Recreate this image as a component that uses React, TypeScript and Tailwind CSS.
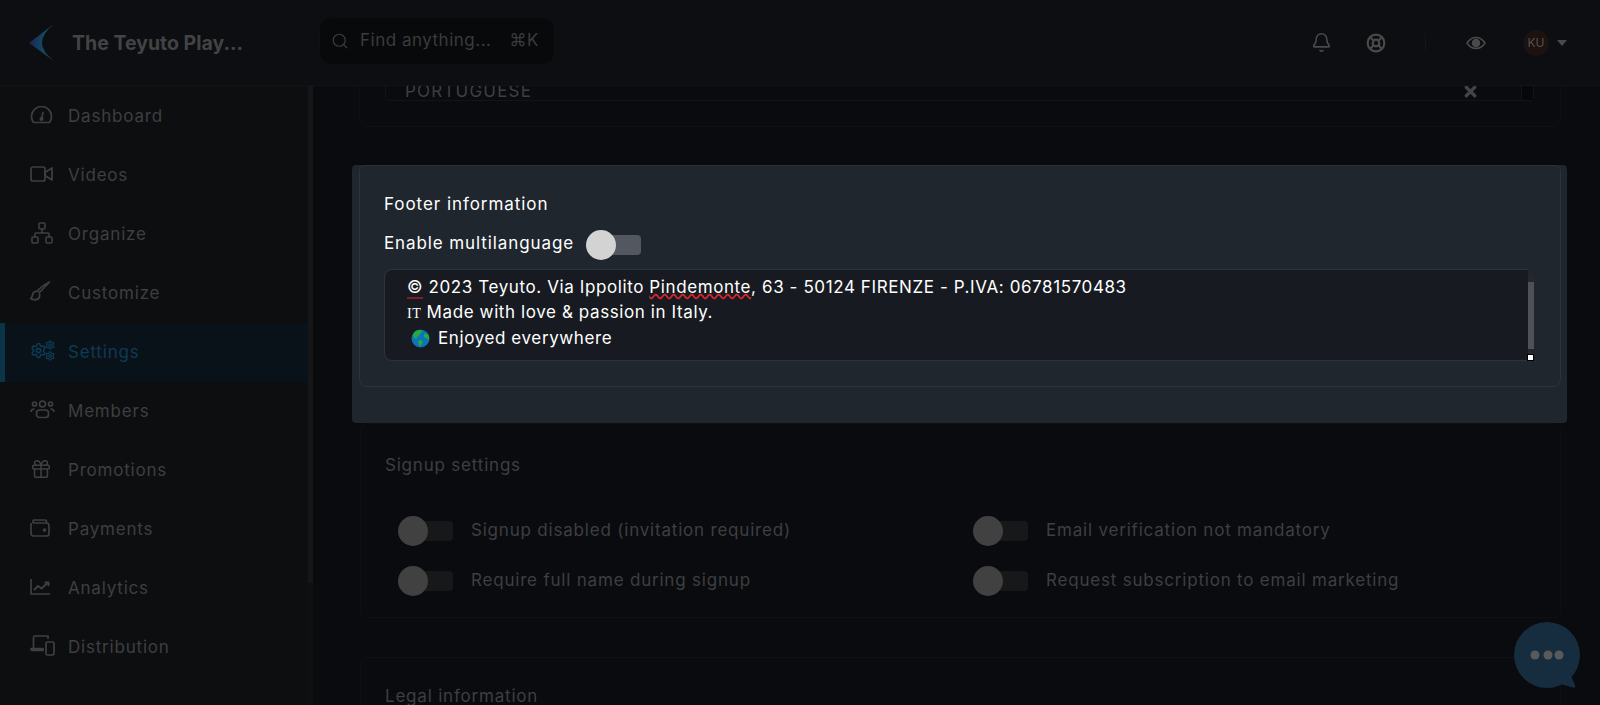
import type { ReactNode } from 'react'
import { Bell, Gift, LifeBuoy, Network, Search, Settings, X } from 'lucide-react'

function GaugeIcon() {
  return (
    <svg width="23" height="18" viewBox="0 0 23 18" fill="none" stroke="currentColor" strokeWidth="1.7" strokeLinecap="round">
      <path d="M3.500 16.500a10 10 0 1 1 16 0z" />
      <path d="M11.500 13.500 13 6.500" />
      <circle cx="11.500" cy="13" r="1.200" fill="currentColor" />
    </svg>
  )
}

function VideoIcon() {
  return (
    <svg width="23" height="16" viewBox="0 0 23 16" fill="none" stroke="currentColor" strokeWidth="1.7" strokeLinejoin="round">
      <rect x="1" y="1" width="14" height="14" rx="2" />
      <path d="m15 6.500 7-4.500v12l-7-4.500z" />
    </svg>
  )
}

function BrushIcon() {
  return (
    <svg width="21" height="21" viewBox="0 0 21 21" fill="none" stroke="currentColor" strokeWidth="1.7" strokeLinejoin="round">
      <path d="M19.500 1 9.500 11.500l-2-2C11 6 15.500 3 19.500 1z" />
      <path d="M7.500 10.500c-2.500-.5-4.500 1-5 3.500-.3 1.800-1 3-1.800 3.500 2.800 2 7.800 1.800 8.800-1.800.4-1.400.2-2.500-.4-3.300" />
    </svg>
  )
}

function CogsIcon() {
  return (
    <span className="relative block h-[21px] w-[25px]">
      <Settings size={17} strokeWidth={2.2} className="absolute left-0 top-[2px]" />
      <Settings size={10} strokeWidth={3} className="absolute right-0 top-0" />
      <Settings size={10} strokeWidth={3} className="absolute bottom-0 right-0" />
    </span>
  )
}

function MembersIcon() {
  return (
    <svg width="25" height="19" viewBox="0 0 25 19" fill="none" stroke="currentColor" strokeWidth="1.7">
      <circle cx="12.500" cy="4" r="3" />
      <circle cx="4.500" cy="4" r="2" />
      <circle cx="20.500" cy="4" r="2" />
      <rect x="6.500" y="10" width="12" height="7.500" rx="3" />
      <path d="M1 12c0-2 1.500-3 3.500-3M24 12c0-2-1.500-3-3.500-3" />
    </svg>
  )
}

function WalletIcon() {
  return (
    <svg width="20" height="18" viewBox="0 0 20 18" fill="none" stroke="currentColor" strokeWidth="1.7" strokeLinejoin="round">
      <path d="M1 4v10.500A2.500 2.500 0 0 0 3.500 17h13a2.500 2.500 0 0 0 2.500-2.500v-8A2.500 2.500 0 0 0 16.500 4H3.500A2.500 2.500 0 0 1 3.500 1h11.500a1.500 1.500 0 0 1 1.500 1.500V4" />
      <circle cx="14.500" cy="11" r="1" fill="currentColor" />
    </svg>
  )
}

function ChartIcon() {
  return (
    <svg width="20" height="16" viewBox="0 0 20 16" fill="none" stroke="currentColor" strokeWidth="1.7" strokeLinejoin="round">
      <path d="M1 0v15h19" />
      <path d="m4 11 4-4 3.500 2.500 6-5.500" strokeWidth="2" />
      <path d="M14.500 3.500h4v3.500" strokeWidth="2" />
    </svg>
  )
}

function DevicesIcon() {
  return (
    <svg width="25" height="21" viewBox="0 0 25 21" fill="none" stroke="currentColor" strokeWidth="1.7" strokeLinejoin="round">
      <path d="M3.500 13V2.500a1.500 1.500 0 0 1 1.500-1.500h13v3" />
      <path d="M1 13.500h12v2H2.500A1.500 1.500 0 0 1 1 14z" fill="currentColor" />
      <rect x="16" y="7" width="8" height="13" rx="1.500" />
    </svg>
  )
}

function GlobeIcon() {
  return (
    <svg width="19" height="19" viewBox="0 0 19 19">
      <circle cx="9.500" cy="9.500" r="9" fill="#0c74b8" />
      <path d="M5 1.800c3-1.600 5-.8 6.500.4-.7 1.600-2 1.400-2.600 2.700-.5 1.300-.8 2.500-2.200 2.700-1 .2-1.400 1.200-.7 2.300-1.300.2-3-1.500-4-3.200.5-1.800 1.600-3.600 3-4.900z" fill="#27a844" />
      <path d="M8 11c1.600-.3 3 .4 3.600 1.500.3 1.300-.8 2.200-1.300 3.500-.3.900-1 1.600-1.600 1.200-.5-1.500-1.800-3-1.400-4.400.2-.8.7-1.500.7-1.800zM13 5c1.300-.6 3-.4 4.200.8.8 1.300 1 3 .8 4.400-.8.600-1.600 0-2-.8-.8-.2-2.400-.3-3-1.800-.3-1 0-2 0-2.600z" fill="#27a844" />
    </svg>
  )
}

const navItems: { label: string; icon: ReactNode; active?: boolean }[] = [
  { label: 'Dashboard', icon: <GaugeIcon /> },
  { label: 'Videos', icon: <VideoIcon /> },
  { label: 'Organize', icon: <Network size={24} strokeWidth={1.6} /> },
  { label: 'Customize', icon: <BrushIcon /> },
  { label: 'Settings', icon: <CogsIcon />, active: true },
  { label: 'Members', icon: <MembersIcon /> },
  { label: 'Promotions', icon: <Gift size={22} strokeWidth={1.7} /> },
  { label: 'Payments', icon: <WalletIcon /> },
  { label: 'Analytics', icon: <ChartIcon /> },
  { label: 'Distribution', icon: <DevicesIcon /> },
]

function Toggle({ dim }: { dim?: boolean }) {
  return (
    <span className="relative block h-[20px] w-[55px] shrink-0">
      <span className={`absolute right-0 top-0 h-[20px] w-[42px] rounded-[4px] ${dim ? 'bg-[#17181a]' : 'bg-[#53575f]'}`} />
      <span className={`absolute -top-[5px] left-0 h-[30px] w-[30px] rounded-full ${dim ? 'bg-[#414141]' : 'bg-[#d3d3d3]'}`} />
    </span>
  )
}

function SignupOption({ label }: { label: string }) {
  return (
    <div className="flex h-[50px] items-center gap-[18px]">
      <Toggle dim />
      <span className="text-[#3e3f41]">{label}</span>
    </div>
  )
}

export default function App() {
  return (
    <div
      className="flex h-screen w-full flex-col overflow-hidden bg-[#090b0e] text-[17px] tracking-[0.8px]"
      style={{ fontFamily: 'Inter, "Noto Sans", sans-serif' }}
    >
      {/* Top bar */}
      <header className="flex h-[86px] shrink-0 items-center border-b border-[#111316] bg-[#0c0e11]">
        <div className="flex w-[319px] shrink-0 items-center pl-[29px]">
          <svg width="25" height="37" viewBox="0 0 25 37">
            <defs>
              <linearGradient id="logo" x1="0" x2="1" y1="0" y2="0">
                <stop offset="0" stopColor="#1a2352" />
                <stop offset="1" stopColor="#0f6470" />
              </linearGradient>
            </defs>
            <path d="M25 0 0 19l25 18Q1 19 25 0z" fill="url(#logo)" />
          </svg>
          <span className="ml-[18px] mt-[3px] text-[19.500px] font-bold tracking-normal text-[#424344]">The Teyuto Play...</span>
        </div>
        <div className="mb-[4px] flex h-[48px] w-[236px] items-center rounded-xl border border-[#0e1012] bg-[#08090b] pl-[11px] text-[#3a3b3d]">
          <Search size={18} strokeWidth={1.6} />
          <span className="ml-[11px] tracking-[0.5px]">Find anything...</span>
          <span className="ml-[18px] tracking-[0.5px]">⌘K</span>
        </div>
        <div className="ml-auto flex items-center pr-[33px] text-[#4a4a4b]">
          <Bell size={21} strokeWidth={1.8} />
          <LifeBuoy size={20} strokeWidth={2.6} className="ml-[34px]" />
          <span className="ml-[39px] h-[17px] w-px bg-[#131518]" />
          <svg width="20" height="14" viewBox="0 0 20 14" fill="none" stroke="currentColor" strokeWidth="1.5" className="ml-[40px]">
            <path d="M1 7c2.400-3.600 5.400-5.500 9-5.500S16.600 3.400 19 7c-2.400 3.600-5.400 5.500-9 5.500S3.400 10.600 1 7z" />
            <circle cx="10" cy="7" r="3.500" fill="currentColor" />
          </svg>
          <span className="ml-[37px] flex h-[26px] w-[26px] items-center justify-center rounded-full bg-[#1c1210] text-[12px] tracking-normal text-[#57514e]">
            KU
          </span>
          <span className="ml-[8px] h-0 w-0 border-x-[5px] border-t-[6px] border-x-transparent border-t-[#4a4a4b]" />
        </div>
      </header>

      <div className="flex min-h-0 flex-1">
        {/* Sidebar */}
        <aside className="flex w-[313px] shrink-0 bg-[#0d0e10]">
          <nav className="w-[308px] pt-px">
            {navItems.map((item) => (
              <div
                key={item.label}
                className={`flex h-[59px] items-center border-l-[5px] pl-[25px] ${
                  item.active ? 'border-[#0c3449] bg-[#0a1219] text-[#0e3a53]' : 'border-transparent text-[#3e3f41]'
                }`}
              >
                <span className="flex w-[38px] -translate-y-[2px] items-center">{item.icon}</span>
                <span className="tracking-[0.8px]">{item.label}</span>
              </div>
            ))}
          </nav>
          <div className="w-[5px] bg-[#0f1012]">
            <div className="h-[497px] bg-[#151618]" />
          </div>
        </aside>

        {/* Settings content */}
        <main className="relative min-w-0 flex-1 overflow-hidden">
          <div className="-mt-[20px] ml-[46px] mr-[39px] h-[61px] rounded-lg border border-[#0e1013]">
            <div className="relative ml-[25px] mr-[26px] flex h-[34px] items-end rounded border border-[#121417] pl-[19px] leading-[17px] text-[#3e3f41]">
              <span className="tracking-[1.200px]">PORTUGUESE</span>
              <X size={17} strokeWidth={4.5} className="absolute bottom-0 right-[54px] text-[#434445]" />
              <span className="absolute inset-y-0 right-0 w-[12px] border-l border-[#121417] bg-[#060708]" />
            </div>
          </div>

          <section className="ml-[39px] mr-[33px] mt-[38px] h-[258px] rounded bg-[#1f262e] pl-[7px] pr-[6px] text-white">
            <div className="h-[222px] rounded-b-lg rounded-t-md border border-[#2c333b] pl-[24px] pr-[32px] pt-[26px]">
              <h2 className="tracking-[0.950px]">Footer information</h2>
              <div className="mt-[17px] flex h-[20px] items-center gap-[12px]">
                <span className="-translate-y-px tracking-[0.900px]">Enable multilanguage</span>
                <Toggle />
              </div>
              <div className="relative mt-[14px] h-[92px] rounded-l-lg border border-r-0 border-[#2c333b] bg-[#171b21] pl-[22px] pt-[5px] leading-[25px] tracking-[0.600px]">
                <p>
                  <span className="underline decoration-[#7a2024] decoration-2 underline-offset-4">©</span> 2023 Teyuto. Via Ippolito{' '}
                  <span className="underline decoration-[#d8252b] decoration-wavy">Pindemonte</span>, 63 - 50124 FIRENZE - P.IVA: 06781570483
                </p>
                <p>
                  <span
                    className="text-[14px] font-medium tracking-[0.500px]"
                    style={{ fontFamily: '"Liberation Serif", serif' }}
                  >
                    IT
                  </span>{' '}
                  Made with love &amp; passion in Italy.
                </p>
                <p className="flex h-[25px] items-center gap-[8px] pl-[4px]">
                  <GlobeIcon /> Enjoyed everywhere
                </p>
                {/* scrollbar and resize handle */}
                <div className="absolute -right-[6px] top-[4px] h-[82px] w-[6px] bg-[#24282e] py-[8px]">
                  <div className="h-[67px] bg-[#4e5156]" />
                </div>
                <div className="absolute -bottom-px -right-[6px] h-[7px] w-[7px] border border-black bg-white" />
              </div>
            </div>
          </section>

          <section className="ml-[47px] mr-[39px] h-[195px] rounded-lg border border-[#0e1013] pl-[24px] pt-[29px] text-[#3e3f41]">
            <h2>Signup settings</h2>
            <div className="ml-[13px] mt-[27px] grid grid-cols-[575px_1fr]">
              <SignupOption label="Signup disabled (invitation required)" />
              <SignupOption label="Email verification not mandatory" />
              <SignupOption label="Require full name during signup" />
              <SignupOption label="Request subscription to email marketing" />
            </div>
          </section>

          <section className="ml-[47px] mr-[39px] mt-[39px] h-[120px] rounded-lg border border-[#0e1013] pl-[24px] pt-[26px] text-[#3e3f41]">
            <h2>Legal information</h2>
          </section>

          {/* Chat launcher */}
          <svg width="68" height="68" viewBox="0 0 68 68" className="absolute bottom-[16px] right-[19px]">
            <circle cx="34" cy="34" r="33" fill="#152d3f" />
            <path d="M56 50 62 64Q63 67.500 60 66.500L44 62z" fill="#152d3f" />
            <circle cx="22" cy="34" r="4.500" fill="#5a5a5a" />
            <circle cx="35" cy="34" r="4.500" fill="#5a5a5a" />
            <circle cx="46" cy="34" r="4.500" fill="#5a5a5a" />
          </svg>
        </main>
      </div>
    </div>
  )
}
